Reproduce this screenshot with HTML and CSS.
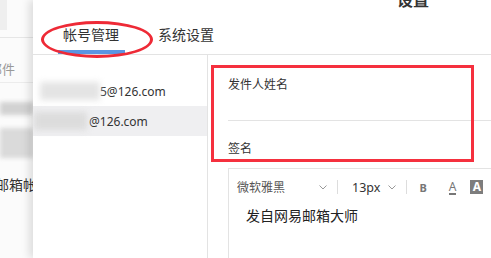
FILE: index.html
```html
<!DOCTYPE html>
<html lang="zh-CN">
  <head>
    <meta charset="UTF-8" />
    <meta name="viewport" content="width=device-width, initial-scale=1.0" />
    <title>设置 - 帐号管理</title>
    <link rel="stylesheet" href="styles.css">
  </head>
  <body>
    <div class="screen">
      <!-- mail page behind the dialog -->
      <div class="behind">
        <div class="behind-top"><span class="behind-block"></span></div>
        <div class="behind-row">邮件</div>
        <div class="behind-blur"></div>
        <div class="behind-blur behind-blur-tall"></div>
        <div class="behind-name">邮箱帐号</div>
      </div>

      <div class="dialog">
        <div class="dialog-head"><h1 class="dialog-title">设置</h1></div>
        <ul class="tabs">
          <li class="tab current">帐号管理</li>
          <li class="tab">系统设置</li>
        </ul>
        <div class="dialog-body">
          <ul class="accounts">
            <li class="account"><span class="mask mask-first"></span>5@126.com</li>
            <li class="account current"><span class="mask mask-second"></span>@126.com</li>
          </ul>
          <div class="settings">
            <div class="field-label">发件人姓名</div>
            <div class="field-input"></div>
            <div class="field-label field-label-sign">签名</div>
            <div class="editor">
              <div class="toolbar">
                <span class="tool-font">微软雅黑</span>
                <svg class="chevron chevron-font" width="8" height="5" viewBox="0 0 8 5"><path d="M0.5 0.5 L4 4 L7.5 0.5" fill="none" stroke="#999" stroke-width="1"/></svg>
                <span class="tool-sep"></span>
                <span class="tool-size">13px</span>
                <svg class="chevron chevron-size" width="8" height="5" viewBox="0 0 8 5"><path d="M0.5 0.5 L4 4 L7.5 0.5" fill="none" stroke="#999" stroke-width="1"/></svg>
                <span class="tool-sep tool-sep-size"></span>
                <span class="tool-bold">B</span>
                <span class="tool-color">A</span>
                <span class="tool-back">A</span>
              </div>
              <div class="editor-text">发自网易邮箱大师</div>
            </div>
          </div>
        </div>
      </div>

      <!-- red annotation marks -->
      <span class="mark-ellipse"></span>
      <span class="mark-box"></span>
    </div>
  </body>
</html>
```

FILE: styles.css
```css
body,
ul,
li,
h1 {
  margin: 0;
  padding: 0;
}
ul {
  list-style: none;
}
body {
  font-family: "Noto Sans", "Noto Sans CJK SC", sans-serif;
  color: #333;
  background: #fff;
}
.screen {
  position: relative;
  display: flex;
  width: 491px;
  height: 258px;
  overflow: hidden;
}

/* page behind */
.behind {
  width: 33px;
  flex-shrink: 0;
  overflow: hidden;
  background: #fbfbfb;
}
.behind-top {
  height: 37px;
  border-bottom: 1px solid #e6e6e6;
}
.behind-block {
  display: block;
  width: 7px;
  height: 30px;
  background: #efefef;
}
.behind-row {
  height: 23px;
  padding-top: 21px;
  line-height: 20px;
  font-size: 13px;
  color: #999;
  margin-left: -11px;
  border-bottom: 1px solid #ececec;
  white-space: nowrap;
}
.behind-blur {
  width: 34px;
  height: 13px;
  margin-top: 19px;
  background: #d2d2d2;
  filter: blur(2px);
}
.behind-blur-tall {
  height: 30px;
  margin-top: 13px;
  background: #dadada;
}
.behind-name {
  margin-top: 17px;
  margin-left: -5px;
  line-height: 20px;
  font-size: 14px;
  color: #333;
  white-space: nowrap;
}

/* dialog */
.dialog {
  flex: 1;
  position: relative;
  z-index: 1;
  background: #fff;
  box-shadow: -4px 0 8px rgba(0, 0, 0, 0.12);
}
.dialog-head {
  display: flow-root;
  height: 20px;
  padding-left: 364px;
}
.dialog-title {
  margin-top: -8px;
  line-height: 16px;
  font-size: 16px;
  font-weight: bold;
  color: #333;
}
.tabs {
  display: flex;
  gap: 28px;
  padding-left: 25px;
  height: 34px;
  border-bottom: 1px solid #e3e3e3;
}
.tab {
  padding: 5px 6px 0 5px;
  height: 25px;
  line-height: 20px;
  font-size: 14px;
  color: #333;
  border-bottom: 4px solid transparent;
}
.tab.current {
  border-bottom-color: #5b95e2;
}
.dialog-body {
  display: flex;
  height: 203px;
}
.accounts {
  width: 174px;
  padding-top: 21px;
  border-right: 1px solid #e3e3e3;
}
.account {
  display: flex;
  align-items: center;
  height: 30px;
  padding-left: 7px;
  font-size: 12px;
  color: #333;
  white-space: nowrap;
}
.account.current {
  background: #efeff1;
}
.mask {
  display: inline-block;
  height: 18px;
  background: #dcdcdc;
  filter: blur(3px);
}
.mask-first {
  width: 60px;
  margin-right: 0;
  background: #e4e4e4;
}
.mask-second {
  width: 53px;
  margin-right: 2px;
  margin-left: -6px;
}
.settings {
  flex: 1;
  padding: 20px 0 0 20px;
}
.field-label {
  line-height: 20px;
  font-size: 12px;
  color: #333;
}
.field-input {
  height: 25px;
  border-bottom: 1px solid #e3e3e3;
}
.field-label-sign {
  margin-top: 18px;
}
.editor {
  margin-top: 9px;
  height: 100px;
  border: 1px solid #e3e3e3;
  border-right: none;
}
.toolbar {
  display: flex;
  align-items: center;
  height: 20px;
  padding: 8px 0 0 8px;
  white-space: nowrap;
}
.tool-font {
  font-size: 12px;
  color: #555;
}
.chevron {
  flex-shrink: 0;
}
.chevron-font {
  margin-left: 34px;
}
.chevron-size {
  margin-left: 8px;
}
.tool-sep {
  width: 1px;
  height: 14px;
  margin-left: 10px;
  background: #ddd;
}
.tool-sep-size {
  margin-left: 10px;
}
.tool-size {
  margin-left: 14px;
  font-size: 12.5px;
  color: #333;
}
.tool-bold {
  margin-left: 12px;
  font-size: 11px;
  font-weight: bold;
  color: #777;
}
.tool-color {
  margin-left: 22px;
  font-size: 12px;
  line-height: 13px;
  color: #777;
  border-bottom: 2px solid #777;
}
.tool-back {
  margin-left: 14px;
  width: 13px;
  height: 14px;
  line-height: 14px;
  text-align: center;
  font-size: 12px;
  font-weight: bold;
  color: #fff;
  background: #7d7d7d;
}
.editor-text {
  padding: 9px 0 0 17px;
  line-height: 20px;
  font-size: 14px;
  color: #222;
}

/* annotations */
.mark-ellipse {
  position: absolute;
  left: 41px;
  top: 21px;
  width: 106px;
  height: 31px;
  border: 3px solid #ee2a36;
  border-radius: 50%;
  z-index: 2;
}
.mark-box {
  position: absolute;
  left: 211px;
  top: 65px;
  width: 257px;
  height: 91px;
  border: 3px solid #f5303e;
  z-index: 2;
}
```
